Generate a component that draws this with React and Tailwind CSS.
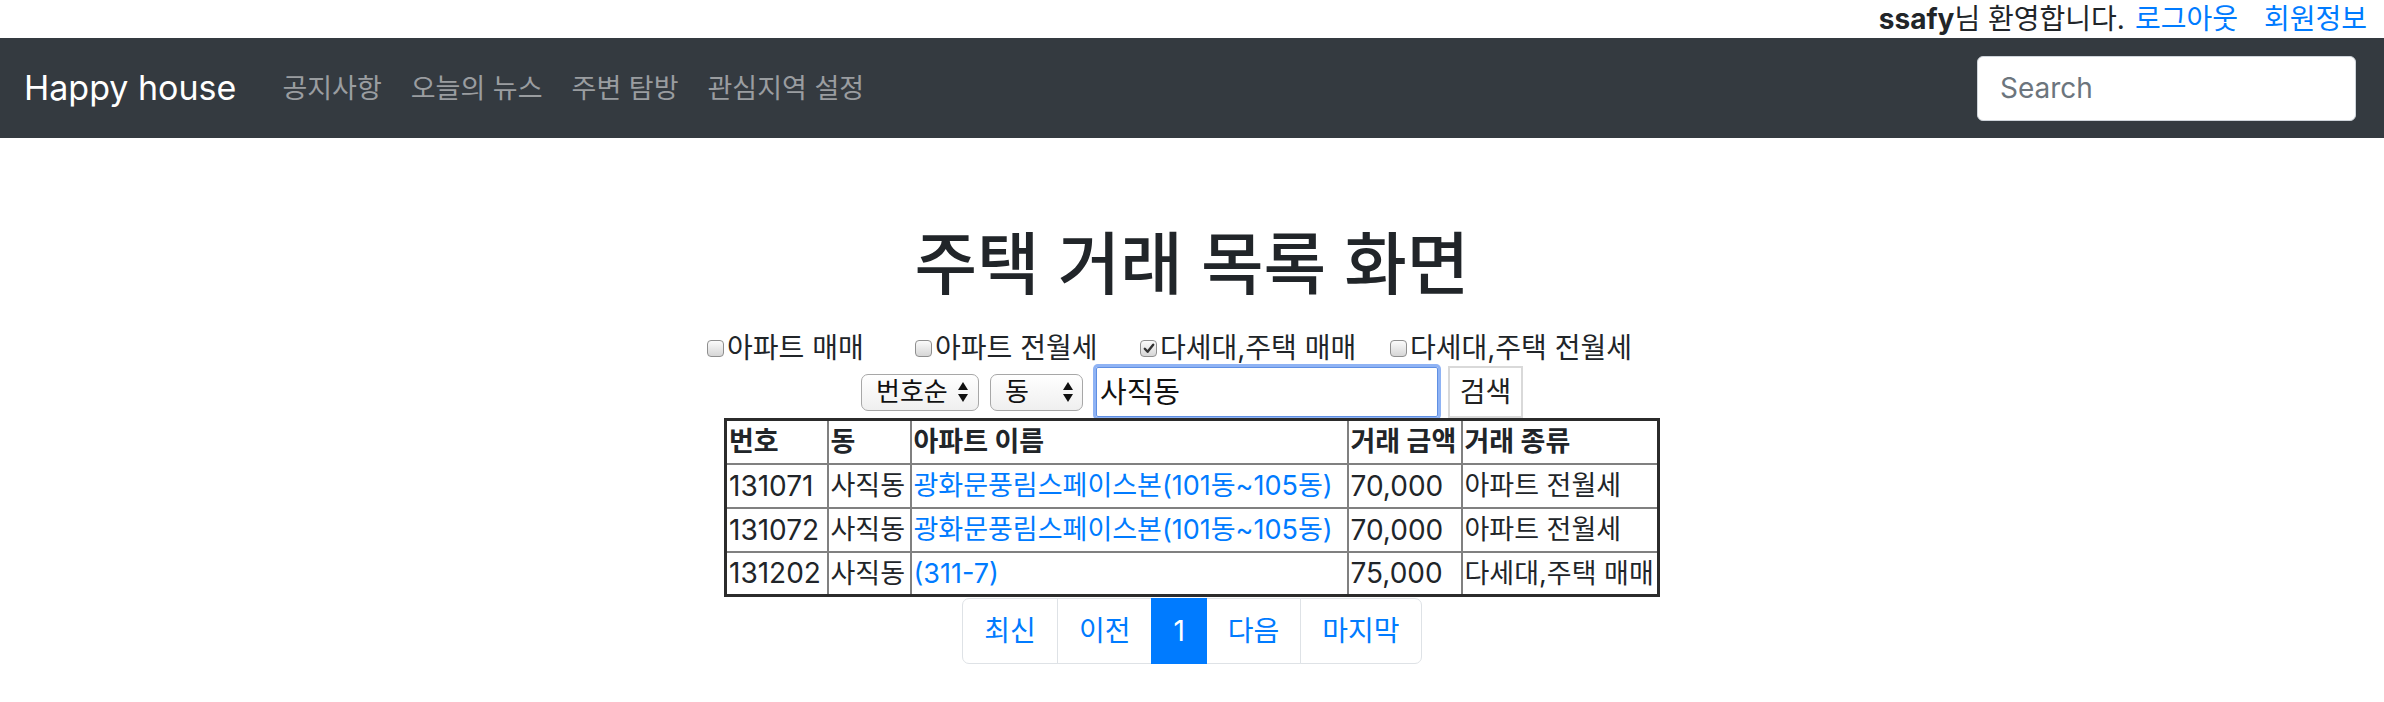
import React from 'react';

const font = "font-['Inter','Noto_Sans_CJK_KR',sans-serif]";

const Check = ({ checked }) => (
    <span className="inline-flex h-[17px] w-[17px] shrink-0 items-center justify-center rounded-[4px] border border-[#8f8f8f] bg-linear-to-b from-[#fbfbfb] to-[#d6d6d6]">
        {checked && (
            <svg width="12" height="11" viewBox="0 0 12 11">
                <path d="M1.8 5.8 L4.6 8.8 L10.2 1.8" fill="none" stroke="#333" strokeWidth="2.4" strokeLinecap="round" strokeLinejoin="round" />
            </svg>
        )}
    </span>
);

const UpDown = () => (
    <svg width="12" height="22" viewBox="0 0 12 22">
        <path d="M6 1 L11 9 L1 9 Z" fill="#111" />
        <path d="M6 21 L11 13 L1 13 Z" fill="#111" />
    </svg>
);

const rows = [
    { no: '131071', dong: '사직동', name: '광화문풍림스페이스본(101동~105동)', price: '70,000', type: '아파트 전월세' },
    { no: '131072', dong: '사직동', name: '광화문풍림스페이스본(101동~105동)', price: '70,000', type: '아파트 전월세' },
    { no: '131202', dong: '사직동', name: '(311-7)', price: '75,000', type: '다세대,주택 매매' },
];

// each filter takes a fixed slot so the row lines up like the original spacing
const filters = [
    { label: '아파트 매매', checked: false, w: 'w-[208px]' },
    { label: '아파트 전월세', checked: false, w: 'w-[225px]' },
    { label: '다세대,주택 매매', checked: true, w: 'w-[250px]' },
    { label: '다세대,주택 전월세', checked: false, w: 'w-[244px]' },
];

const pages = [
    { label: '최신', active: false },
    { label: '이전', active: false },
    { label: '1', active: true },
    { label: '다음', active: false },
    { label: '마지막', active: false },
];

const cell = 'overflow-hidden whitespace-nowrap border-2 border-[#808080] px-[2px]';

export default function App() {
    return (
        <div className={`${font} min-h-[702px] w-full bg-white text-[#212529]`}>
            {/* top greeting bar */}
            <div className="flex h-[38px] items-center justify-end pr-[17px] text-[28px] leading-none">
                <span className="font-bold">ssafy</span>
                <span>님 환영합니다.</span>
                <a className="ml-[10px] text-[#007bff]">로그아웃</a>
                <a className="ml-[26px] text-[#007bff]">회원정보</a>
            </div>

            {/* navbar */}
            <nav className="flex h-[100px] items-center bg-[#343a40] pl-[24px] pr-[28px]">
                <span className="text-[34px] leading-none text-white">Happy house</span>
                <div className="ml-[46px] flex items-center gap-[29px] text-[27px] leading-none text-[#9a9da0]">
                    <a>공지사항</a>
                    <a>오늘의 뉴스</a>
                    <a>주변 탐방</a>
                    <a>관심지역 설정</a>
                </div>
                <input
                    placeholder="Search"
                    className="ml-auto h-[65px] w-[379px] rounded-[6px] border border-[#ced4da] bg-white px-[22px] text-[28px] text-[#495057] outline-none placeholder:text-[#6c757d]"
                />
            </nav>

            <main className="flex flex-col items-center">
                <h1 className="mt-[83px] h-[86px] text-[68px] font-medium leading-[86px] text-[#212529]">
                    주택 거래 목록 화면
                </h1>

                {/* filter checkboxes */}
                <div className="mt-[23px] flex h-[36px] w-full items-center justify-center pr-[43px] text-[28px] leading-none">
                    {filters.map((f) => (
                        <label key={f.label} className={`${f.w} flex flex-none items-center gap-[3px] whitespace-nowrap`}>
                            <Check checked={f.checked} />
                            <span>{f.label}</span>
                        </label>
                    ))}
                </div>

                {/* search controls */}
                <div className="flex h-[52px] items-center text-[#111]">
                    <div className="flex h-[37px] w-[118px] items-center justify-between rounded-[7px] border border-[#a7a7a7] bg-linear-to-b from-white to-[#efefef] pl-[14px] pr-[9px] text-[26px] leading-none">
                        <span>번호순</span>
                        <UpDown />
                    </div>
                    <div className="ml-[11px] flex h-[37px] w-[93px] items-center justify-between rounded-[7px] border border-[#a7a7a7] bg-linear-to-b from-white to-[#efefef] pl-[14px] pr-[8px] text-[26px] leading-none">
                        <span>동</span>
                        <UpDown />
                    </div>
                    <div className="ml-[13px] flex h-[50px] w-[342px] items-center rounded-[2px] border border-[#5f8fe3] pl-[3px] text-[29px] leading-none shadow-[0_0_0_3px_#8fb3f4]">
                        사직동
                    </div>
                    <button className="ml-[10px] flex h-[52px] w-[75px] items-center justify-center border-2 border-[#d9d9d9] bg-white text-[28px] leading-none text-[#222]">
                        검색
                    </button>
                </div>

                {/* result table */}
                <table className="w-[933px] table-fixed border-collapse border-[3px] border-[#2b2b2b] text-[27px] leading-none">
                    <colgroup>
                        <col className="w-[102px]" />
                        <col className="w-[83px]" />
                        <col className="w-[437px]" />
                        <col className="w-[114px]" />
                        <col className="w-[197px]" />
                    </colgroup>
                    <thead>
                        <tr className="h-[44px]">
                            {['번호', '동', '아파트 이름', '거래 금액', '거래 종류'].map((h) => (
                                <th key={h} className={`${cell} text-left font-bold`}>
                                    {h}
                                </th>
                            ))}
                        </tr>
                    </thead>
                    <tbody>
                        {rows.map((r) => (
                            <tr key={r.no} className="h-[44px]">
                                <td className={`${cell} text-[28px]`}>{r.no}</td>
                                <td className={cell}>{r.dong}</td>
                                <td className={`${cell} text-[#007bff]`}>{r.name}</td>
                                <td className={`${cell} text-[28px]`}>{r.price}</td>
                                <td className={cell}>{r.type}</td>
                            </tr>
                        ))}
                    </tbody>
                </table>

                {/* pagination */}
                <div className="mt-[1px] flex h-[66px] text-[28px] leading-none">
                    {pages.map((p, i) => (
                        <a
                            key={p.label}
                            className={`flex items-center justify-center border px-[21px] ${i > 0 ? '-ml-px' : ''} ${i === 0 ? 'rounded-l-[7px]' : ''} ${i === pages.length - 1 ? 'rounded-r-[7px]' : ''} ${p.active ? 'z-10 border-[#007bff] bg-[#007bff] text-white' : 'border-[#dee2e6] bg-white text-[#007bff]'}`}
                        >
                            {p.label}
                        </a>
                    ))}
                </div>
            </main>
        </div>
    );
}
